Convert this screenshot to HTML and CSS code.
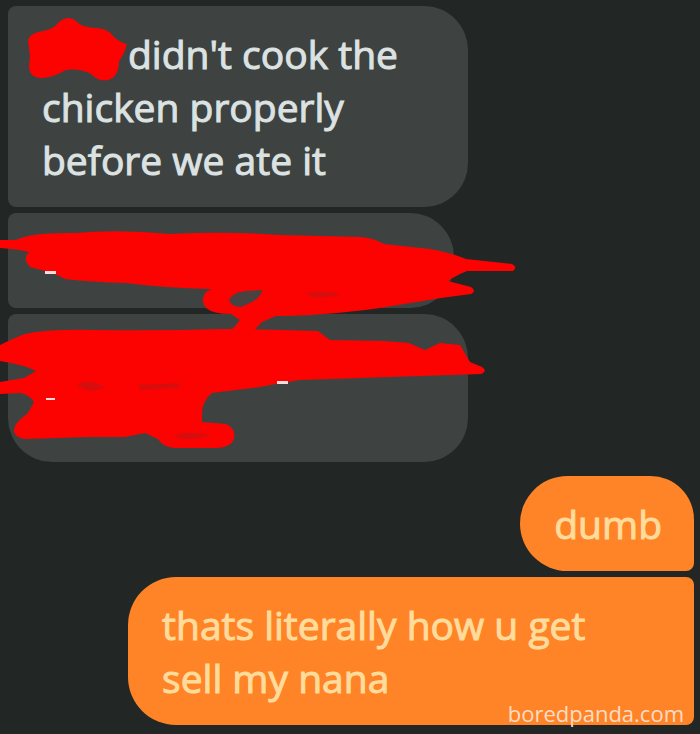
FILE: index.html
```html
<!DOCTYPE html>
<html lang="en">
<head>
<meta charset="utf-8">
<meta name="viewport" content="width=device-width, initial-scale=1">
<title>Chat</title>
<link rel="stylesheet" href="styles.css">
</head>
<body>
<main class="chat">
  <section class="group received">
    <p class="bubble first"><span class="name"></span>didn't cook the<br>chicken properly<br>before we ate it</p>
    <p class="bubble middle"><br></p>
    <p class="bubble last"><br><br></p>
    <svg class="scribbles" viewBox="8 6 459 456" width="459" height="456" aria-hidden="true">
      <g class="ink">
        <path d="M28 40Q30 33 43 31Q54 29 58 23Q68 14 76 21Q82 28 97 28Q109 29 114 37Q121 43 127 44Q124 55 119 61Q119 77 108 80Q99 82 91 74Q80 68 66 70Q50 79 40 78Q30 77 29 68L30 56Z"/>
        <path d="M0 240H16Q32 232 75 233Q120 229 170 234Q230 231 280 235L360 237Q374 238 384 244L430 249Q452 253 466 259L512 264Q518 267 513 271L467 271Q455 276 448 281L471 287Q477 291 471 294L441 298Q410 303 380 308Q320 316 276 316L262 322Q254 330 247 338H224Q232 330 240 320L231 314Q213 314 206 308Q200 302 205 293L211 289Q164 288 126 283Q92 282 65 279L53 273L30 267Q22 258 29 252Q18 249 0 248Z"/>
        <path d="M0 345Q14 338 25 334Q48 329 95 330Q160 331 224 329L240 329L318 331L330 340L384 341L409 343L425 350L440 343L460 345L470 362L482 367Q488 371 481 374L300 380Q279 383 260 387L212 393Q202 401 202 414L202 422L226 424Q236 428 234 439Q231 447 218 448H174Q163 447 158 439L145 433L125 437H90L24 439Q13 436 14 430Q14 423 28 413L34 402Q30 395 20 393L0 394V382L24 378L36 371Q25 365 0 361Z"/>
      </g>
      <path class="gaps" d="M229 300Q232 293 246 291L262 290Q262 296 252 302L241 307Q231 307 229 300Z"/>
      <g class="shade">
        <path d="M306 293Q325 290 341 294Q330 299 310 297Z"/>
        <path d="M77 384Q92 378 105 388L91 391Q80 389 77 384Z"/>
        <path d="M138 385L180 383L178 388L140 390Z"/>
        <path d="M174 435Q190 430 211 435Q200 440 180 439Z"/>
      </g>
      <path class="glint" d="M45 271H56V274H45ZM277 381H288V384H277ZM46 398H55V400H46Z"/>
    </svg>
  </section>
  <section class="group sent">
    <p class="bubble first">dumb</p>
    <p class="bubble last">thats literally how u get<br>sell my nana</p>
  </section>
  <a class="credit" href="#">boredpanda.com</a>
</main>
</body>
</html>
```
FILE: styles.css
```css
* {
  box-sizing: border-box;
}

body {
  margin: 0;
  background: #222725;
}

.chat {
  position: relative;
  display: flex;
  flex-direction: column;
  gap: 14px;
  padding: 6px 6px 9px 8px;
  font-family: "Open Sans", "Noto Sans", sans-serif;
  font-size: 39px;
  line-height: 53px;
}

.group {
  position: relative;
  display: flex;
  flex-direction: column;
  gap: 6px;
}

.received {
  align-items: flex-start;
  color: #dce2e2;
}

.sent {
  align-items: flex-end;
  color: #ffdc9c;
}

.bubble {
  margin: 0;
  padding: 21px 32px 21px 34px;
  white-space: nowrap;
  -webkit-text-stroke: 1px currentColor;
}

.received .bubble {
  width: 67%;
  background: #3e4341;
  border-radius: 8px 44px 44px 8px;
}

.received .middle {
  width: 65%;
}

.received .last {
  border-bottom-left-radius: 44px;
}

.sent .bubble {
  background: #ff8428;
  border-radius: 48px 8px 8px 48px;
}

.sent .first {
  border-top-right-radius: 44px;
}

.sent .last {
  width: 82.5%;
}

.name {
  display: inline-block;
  width: 86px;
}

.scribbles {
  position: absolute;
  top: 0;
  left: 0;
  overflow: visible;
}

.ink {
  fill: #fc0302;
}

.gaps {
  fill: #484241;
}

.shade {
  fill: #d80e0e;
}

.glint {
  fill: #ffdcdc;
}

.credit {
  position: absolute;
  right: 16px;
  bottom: 8px;
  color: #ffdcc4;
  font-size: 22px;
  line-height: 26px;
  text-decoration: none;
}
```
